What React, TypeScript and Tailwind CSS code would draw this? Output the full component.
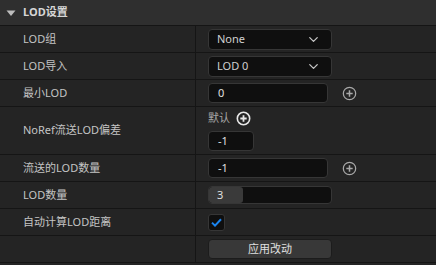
import { ChevronDown } from "lucide-react";

const font = { fontFamily: '"Noto Sans", "Noto Sans CJK SC", sans-serif' };

function PlusCircle({ bold = false }: { bold?: boolean }) {
  return (
    <svg width="15" height="15" viewBox="0 0 16 16" className={bold ? "text-[#e8e8e8]" : "text-[#a8a8a8]"}>
      <circle cx="8" cy="8" r="6.6" fill="none" stroke="currentColor" strokeWidth={bold ? 1.7 : 1.3} />
      <path d="M8 4.6v6.8M4.6 8h6.8" stroke="currentColor" strokeWidth={bold ? 1.9 : 1.6} />
    </svg>
  );
}

function Row({ label, h = "h-[27px]", children }: { label?: string; h?: string; children?: React.ReactNode }) {
  return (
    <div className={`flex ${h} border-b border-[#151515]`}>
      <div className="w-[196px] shrink-0 border-r border-[#151515] flex items-center pl-[23px] text-[11px] text-[#c4c4c4]">
        {label}
      </div>
      <div className="flex-1 flex items-center pl-[12px]">{children}</div>
    </div>
  );
}

function Select({ value }: { value: string }) {
  return (
    <div className="w-[124px] h-[21px] rounded-[4px] bg-[#0f0f0f] border border-[#363636] flex items-center justify-between pl-[8px] pr-[10px] text-[11px] text-[#d0d0d0]">
      <span>{value}</span>
      <ChevronDown size={15} strokeWidth={2} className="text-[#c8c8c8]" />
    </div>
  );
}

function NumInput({ value, w = "w-[120px]" }: { value: string; w?: string }) {
  return (
    <div className={`${w} h-[20px] rounded-[4px] bg-[#0f0f0f] border border-[#363636] flex items-center pl-[9px] text-[11px] text-[#e0e0e0]`}>
      {value}
    </div>
  );
}

export default function App() {
  return (
    <div className="w-[436px] h-[265px] bg-[#242424] overflow-hidden" style={font}>
      <div className="h-[26px] bg-[#2f2f2f] border-b border-[#151515] flex items-center pl-[6px]">
        <svg width="10" height="8" viewBox="0 0 10 8" className="mr-[7px]">
          <path d="M0.5 1.5h9L5 7z" fill="#bdbdbd" />
        </svg>
        <span className="text-[11px] font-bold text-[#d6d6d6]">LOD设置</span>
      </div>
      <Row label="LOD组">
        <Select value="None" />
      </Row>
      <Row label="LOD导入">
        <Select value="LOD 0" />
      </Row>
      <Row label="最小LOD">
        <NumInput value="0" />
        <div className="ml-[14px] flex">
          <PlusCircle />
        </div>
      </Row>
      <Row label="NoRef流送LOD偏差" h="h-[48px]">
        <div className="flex flex-col gap-[5px]">
          <div className="flex items-center gap-[6px] text-[11px] text-[#a8a8a8]">
            <span>默认</span>
            <PlusCircle bold />
          </div>
          <NumInput value="-1" w="w-[46px]" />
        </div>
      </Row>
      <Row label="流送的LOD数量">
        <NumInput value="-1" />
        <div className="ml-[14px] flex">
          <PlusCircle />
        </div>
      </Row>
      <Row label="LOD数量">
        <div className="w-[124px] h-[18px] rounded-[4px] bg-[#0f0f0f] border border-[#363636] flex overflow-hidden">
          <div className="w-[34px] h-full bg-[#3a3a3a] rounded-[3px] flex items-center pl-[8px] text-[11px] text-[#e0e0e0]">
            3
          </div>
        </div>
      </Row>
      <Row label="自动计算LOD距离">
        <div className="w-[17px] h-[17px] rounded-[3px] bg-[#0f0f0f] border border-[#363636] flex items-center justify-center">
          <svg width="11" height="9" viewBox="0 0 11 9">
            <path d="M1 4.6l3 3L10 1.2" fill="none" stroke="#1a84f0" strokeWidth="2" />
          </svg>
        </div>
      </Row>
      <Row>
        <div className="w-[124px] h-[20px] rounded-[4px] bg-[#383838] border border-[#1c1c1c] flex items-center justify-center text-[11px] text-[#e0e0e0]">
          应用改动
        </div>
      </Row>
    </div>
  );
}
